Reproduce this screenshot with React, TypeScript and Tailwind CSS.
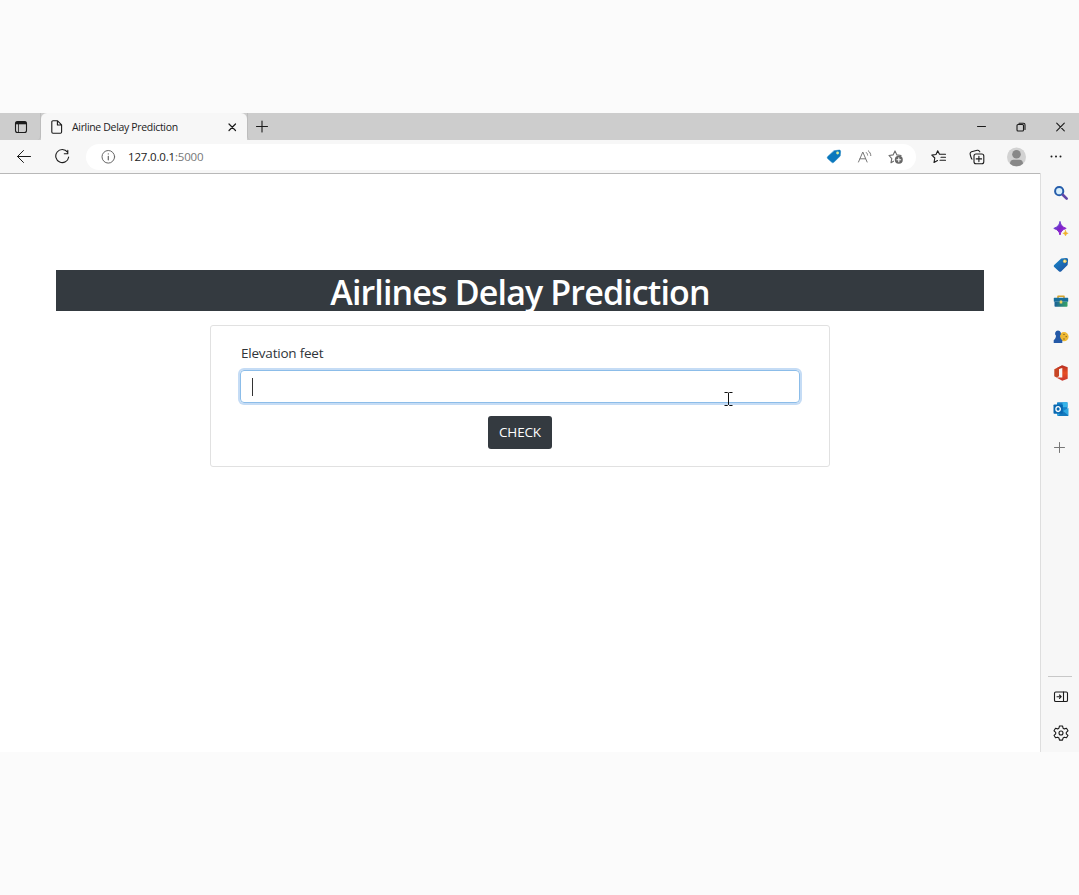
import React from 'react';

type IconProps = { children: React.ReactNode };

function Icon({ children }: IconProps) {
  return (
    <svg
      width="16"
      height="16"
      viewBox="0 0 16 16"
      fill="none"
      stroke="#1b1b1b"
      strokeWidth="1.1"
      strokeLinecap="round"
      strokeLinejoin="round"
      className="block shrink-0"
    >
      {children}
    </svg>
  );
}

function Slot({ width, children }: { width: string; children: React.ReactNode }) {
  return <div className={`${width} flex h-full shrink-0 items-center justify-center`}>{children}</div>;
}

function TabStrip() {
  return (
    <div className="flex h-[27px] bg-[#cdcdcd]">
      <div className="flex w-[41px] items-center justify-center rounded-br border-r border-[#bdbdbd] pl-px">
        <Icon>
          <rect x="2.5" y="2.5" width="11" height="11" rx="2" />
          <path d="M2.8 4h10.4" strokeWidth="2.6" strokeLinecap="butt" />
          <path d="M5.5 5v8" strokeWidth=".8" />
        </Icon>
      </div>
      <div className="flex w-[206px] items-center rounded-t-md bg-[#f7f7f7] pl-[8px]">
        <Icon>
          <path d="M4 1.800h4.600l4 4V13a1.200 1.200 0 0 1-1.200 1.200H4A1.200 1.200 0 0 1 2.800 13V3A1.200 1.200 0 0 1 4 1.800ZM8.400 2v4h4" />
        </Icon>
        <span className="ml-[7px] w-[152px] pt-px text-[10.5px] leading-none tracking-[-0.33px] whitespace-nowrap text-[#222]">
          Airline Delay Prediction
        </span>
        <Icon>
          <path d="m5 5 6.500 6.500m0-6.500L5 11.500" strokeWidth="1.200" />
        </Icon>
      </div>
      <div className="flex w-[31px] items-center justify-center rounded-bl border-l border-[#bdbdbd] pr-[2px]">
        <Icon>
          <path d="M8 2v11M2.500 7.500h11" />
        </Icon>
      </div>
      <div className="flex-1" />
      <Slot width="w-[39px]">
        <Icon>
          <path d="M3.500 7.500h8" strokeWidth="1" />
        </Icon>
      </Slot>
      <Slot width="w-[39px]">
        <Icon>
          <rect x="4" y="5.500" width="6.500" height="6.500" rx="1" />
          <path d="M6 4.300h4.500A1.500 1.500 0 0 1 12 5.800v4.700" />
        </Icon>
      </Slot>
      <Slot width="w-[39px]">
        <Icon>
          <path d="m4.700 4.200 7.600 7.600m0-7.600-7.600 7.600" />
        </Icon>
      </Slot>
    </div>
  );
}

function AddressBar() {
  return (
    <div className="flex h-[26px] w-[830px] items-center rounded-full bg-white pr-[12px] pl-[14px]">
      <Icon>
        <g stroke="#666" strokeWidth="1">
          <circle cx="8.300" cy="7.800" r="6.300" />
          <path d="M8.300 7.300v3.500M8.300 4.800v.2" strokeWidth="1.200" />
        </g>
      </Icon>
      <span className="ml-[12px] flex-1 text-[11.5px] leading-none tracking-[-0.18px] text-[#222]">
        127.0.0.1<span className="text-[#777]">:5000</span>
      </span>
      <div className="flex items-center gap-[15px]">
        <Icon>
          <path d="M8.200 1.700 13 1.100c1.200-.1 1.700.5 1.600 1.700l-.4 4.300-6.400 6.200c-.7.600-1.400.6-2 0L1.600 9.500c-.5-.6-.5-1.300.1-1.900Z" fill="#0b78bd" stroke="#0b78bd" strokeWidth=".5" />
          <circle cx="11.600" cy="4" r="1.400" fill="#d8ed9c" stroke="none" />
        </Icon>
        <Icon>
          <g stroke="#777" strokeWidth="1">
            <path d="M1.500 13 5.800 3l4.300 10M3 9.800h5.600M9.300 3.500c.8.700 1.200 1.600 1.300 2.600M11.300 1.800c1.700 1.300 2.400 3 2.500 4.800" />
          </g>
        </Icon>
        <Icon>
          <path d="M5.500 12.200 3 13.700l.8-4.100L1 6.500l4.100-.6 1.900-4 1.900 4 4.200.6" stroke="#6c6c6c" />
          <circle cx="10.800" cy="10.800" r="4" fill="#666" stroke="none" />
          <path d="M10.800 8.900v3.800M8.900 10.800h3.800" stroke="#fff" />
        </Icon>
      </div>
    </div>
  );
}

function Toolbar() {
  return (
    <div className="flex h-[33px] items-center bg-[#f7f7f7]">
      <Slot width="w-[48px]">
        <Icon>
          <path d="M14.500 7.500h-13m6-6-6 6 6 6" strokeWidth="1" />
        </Icon>
      </Slot>
      <Slot width="w-[28px]">
        <Icon>
          <path d="M13.500 3.200A6.500 6.500 0 1 0 14.700 8M13.800 1.400v3.400h-3.500" />
        </Icon>
      </Slot>
      <div className="w-[10px]" />
      <AddressBar />
      <div className="w-[4px]" />
      <Slot width="w-[38px]">
        <Icon>
          <path d="M8.500 5.300 6.700 1.800 5 5.500l-4.200.6 3 2.900L3 13.500l3.500-2M8.500 5.300h6M10 8.300h4.500M9 11.300h5.500" />
        </Icon>
      </Slot>
      <Slot width="w-[38px]">
        <Icon>
          <rect x="5" y="5" width="9.800" height="9.800" rx="2" />
          <path d="M9.900 7.200v5.400M7.200 9.900h5.400M3 10.200C2.300 9.500 1 5.500 1.100 4.500c0-.9.600-1.400 1.400-1.700l5.700-1.500c1-.2 1.700.1 2.200.9l.4.600" />
        </Icon>
      </Slot>
      <Slot width="w-[40px]">
        <svg width="20" height="20" viewBox="0 0 20 20" className="block">
          <circle cx="10.500" cy="10" r="9.500" fill="#d2d2d2" />
          <circle cx="10.500" cy="7.200" r="4.300" fill="#888" />
          <path d="M4 16.700c0-2.800 1.400-4 3.400-4h6.200c2 0 3.400 1.200 3.400 4A9.600 9.600 0 0 1 10.500 19.200 9.600 9.600 0 0 1 4 16.700Z" fill="#888" />
        </svg>
      </Slot>
      <Slot width="w-[39px]">
        <Icon>
          <g fill="#1b1b1b" stroke="none">
            <circle cx="3.500" cy="7.500" r="1" />
            <circle cx="8" cy="7.500" r="1" />
            <circle cx="12.500" cy="7.500" r="1" />
          </g>
        </Icon>
      </Slot>
    </div>
  );
}

const sidebarIcons: React.ReactNode[] = [
  <>
    <circle cx="6.200" cy="6.200" r="4.100" fill="#d8effb" stroke="#255dab" strokeWidth="2" />
    <path d="m10 10 3.700 3.700" stroke="#6146a8" strokeWidth="2.600" />
  </>,
  <>
    <defs>
      <linearGradient id="spark" x1="0" y1="0" x2="1" y2="1">
        <stop stopColor="#5363d6" />
        <stop offset=".5" stopColor="#8021c9" />
        <stop offset="1" stopColor="#a736d8" />
      </linearGradient>
    </defs>
    <path d="M7 .8c1 3.800 2.200 5 6.200 6.600C9.200 8.800 8 10 7 14 6 10 4.800 8.800.8 7.400 4.800 5.800 6 4.600 7 .8Z" fill="url(#spark)" stroke="url(#spark)" strokeWidth="1" />
    <path d="M12.500 9.500c.5 1.700 1 2.300 2.700 2.800-1.700.5-2.200 1-2.700 2.700-.5-1.700-1-2.200-2.700-2.700 1.700-.5 2.200-1.100 2.700-2.800Z" fill="#efb12e" stroke="#efb12e" strokeWidth=".5" />
  </>,
  <>
    <defs>
      <linearGradient id="tag" x1="0" y1="0" x2="1" y2="1">
        <stop stopColor="#168acb" />
        <stop offset="1" stopColor="#214d9d" />
      </linearGradient>
    </defs>
    <path d="M8.200 1.400 13 .9c1.500-.1 2.200.6 2.100 2.100l-.5 5-6.500 6.400c-.7.600-1.400.6-2 0L1.200 9.900c-.6-.7-.6-1.400 0-2Z" fill="url(#tag)" stroke="none" />
    <circle cx="11.800" cy="4.200" r="1.500" fill="#fff0b0" stroke="#dfba42" strokeWidth=".7" />
  </>,
  <>
    <defs>
      <linearGradient id="box">
        <stop stopColor="#195f97" />
        <stop offset="1" stopColor="#38a568" />
      </linearGradient>
    </defs>
    <path d="M5 5V3.200h6V5" stroke="#d5a32c" strokeWidth="1.500" />
    <rect x=".8" y="4.800" width="14.400" height="4" rx=".6" fill="#176e9a" stroke="none" />
    <path d="M1.500 8.800h13V13a.8.8 0 0 1-.8.8H2.300a.8.8 0 0 1-.8-.8Z" fill="url(#box)" stroke="none" />
    <rect x="6.700" y="7.500" width="2.600" height="3" rx=".5" fill="#efd35d" stroke="none" />
  </>,
  <>
    <circle cx="11" cy="7.700" r="4.600" fill="#efb934" stroke="none" />
    <g fill="#76591c" stroke="none">
      <circle cx="11" cy="5.400" r=".65" />
      <circle cx="13.200" cy="7.700" r=".65" />
      <circle cx="11" cy="10" r=".65" />
    </g>
    <path d="M5 1.500a3 3 0 0 1 2 5.200c.1 2 .8 3.200 2.300 4.500V14H.7v-2.800C2.200 9.900 2.900 8.700 3 6.700a3 3 0 0 1 2-5.200Z" fill="#2459a7" stroke="none" />
  </>,
  <>
    <defs>
      <linearGradient id="office" x1="0" y1="0" x2="0" y2="1">
        <stop stopColor="#b52d22" />
        <stop offset=".5" stopColor="#e84f24" />
        <stop offset="1" stopColor="#c9362d" />
      </linearGradient>
    </defs>
    <path d="M1.300 4.300 9.300.3 6 4v7.200l-2.500 1.400-2.200-1.400Z" fill="#c74625" stroke="none" />
    <path d="m9.300.3 5.400 2v11.400l-5.400 2-6-3.100h6V3L6 4 3.500 3.300Z" fill="url(#office)" stroke="none" />
  </>,
  <>
    <rect x="4" y="1.200" width="10.500" height="9.300" rx=".7" fill="#1683ca" stroke="none" />
    <path d="M9.500 1.200h5v5h-5Z" fill="#37b4e9" stroke="none" />
    <path d="m4 7 6 3 5.500-3v7a1 1 0 0 1-1 1H5a1 1 0 0 1-1-1Z" fill="#31a9e2" stroke="none" />
    <path d="m10 10 5.500 4.500c-.2.300-.5.500-1 .5H4.800Z" fill="#1479bd" stroke="none" />
    <rect x=".5" y="3.500" width="9.300" height="9.300" rx=".8" fill="#0868b1" stroke="none" />
    <ellipse cx="5.100" cy="8.100" rx="2.200" ry="2.400" stroke="#fff" strokeWidth="1.300" />
  </>,
];

function Sidebar() {
  return (
    <aside className="flex w-[39px] flex-col items-center border-l border-[#dedede] bg-[#f7f7f7] pt-[2px]">
      {sidebarIcons.map((icon, index) => (
        <div key={index} className="flex h-9 items-center pl-px">
          <Icon>{icon}</Icon>
        </div>
      ))}
      <div className="flex h-[42px] items-center">
        <Icon>
          <path d="M7.500 2.500v10M2.500 7.500h10" stroke="#777" strokeWidth="1" />
        </Icon>
      </div>
      <div className="flex-1" />
      <div className="w-6 border-t border-[#c8c8c8]" />
      <div className="flex h-[38px] items-center pt-[2px] pl-px">
        <Icon>
          <rect x="1.500" y="3" width="13" height="9.500" rx="1.300" />
          <path d="M10.500 3v9.500M4 7.700h4M6.500 6l1.700 1.700-1.700 1.700" />
        </Icon>
      </div>
      <div className="mb-px flex h-9 items-center pl-px">
        <Icon>
          <path d="M6.500 1h3l.6 2.200 1.200.7 2.200-.6 1.500 2.500-1.700 1.500v1.500l1.700 1.500-1.500 2.500-2.200-.6-1.200.7-.6 2.200h-3l-.6-2.200-1.200-.7-2.200.6L1 10.300l1.700-1.500V7.300L1 5.800l1.500-2.500 2.200.6 1.200-.7Z" />
          <circle cx="8" cy="8" r="2" />
        </Icon>
      </div>
    </aside>
  );
}

function PredictionPage() {
  return (
    <main className="relative flex flex-1 flex-col items-center bg-white pt-[96px]">
      <h1 className="flex h-[41px] w-[928px] items-center justify-center bg-[#343a40] pt-[2px] text-[34px] leading-none font-semibold tracking-[-0.86px] whitespace-nowrap text-white">
        Airlines Delay Prediction
      </h1>
      <form className="mt-[14px] flex h-[142px] w-[620px] flex-col rounded-[3px] border border-[#e1e1e1] px-[29px] pt-[19px]">
        <label className="h-[25px] pl-px text-[13.5px] leading-[17px] tracking-[-0.22px] text-[#30353a]">Elevation feet</label>
        <div className="flex h-[33px] items-center rounded-[4px] border border-[#8cbde9] pl-[11px] shadow-[0_0_0_2px_#c5dcf5]">
          <span className="h-[18px] w-px bg-[#333]" />
        </div>
        <button
          type="button"
          className="mt-[13px] h-[33px] w-[64px] self-center rounded-[3px] bg-[#343a40] text-[13.5px] leading-none tracking-[-0.15px] whitespace-nowrap text-white"
        >
          CHECK
        </button>
      </form>
      <svg width="9" height="15" viewBox="0 0 9 15" className="absolute top-[217px] left-[724px]" fill="none" stroke="#111" strokeWidth="1">
        <path d="M.5 1.500H3.500l1 .5 1-.5h3M4.500 2v11.500M.5 14.500h3l1-1 1 1h3" />
      </svg>
    </main>
  );
}

export default function App() {
  return (
    <div className="h-[895px] w-[1079px] overflow-hidden bg-[#fbfbfb] pt-[113px] font-['Open_Sans','Noto_Sans',sans-serif]">
      <div className="flex h-[639px] flex-col">
        <TabStrip />
        <Toolbar />
        <div className="flex flex-1">
          <div className="flex w-[1040px] flex-col border-t border-[#b8b8b8]">
            <PredictionPage />
          </div>
          <Sidebar />
        </div>
      </div>
    </div>
  );
}
